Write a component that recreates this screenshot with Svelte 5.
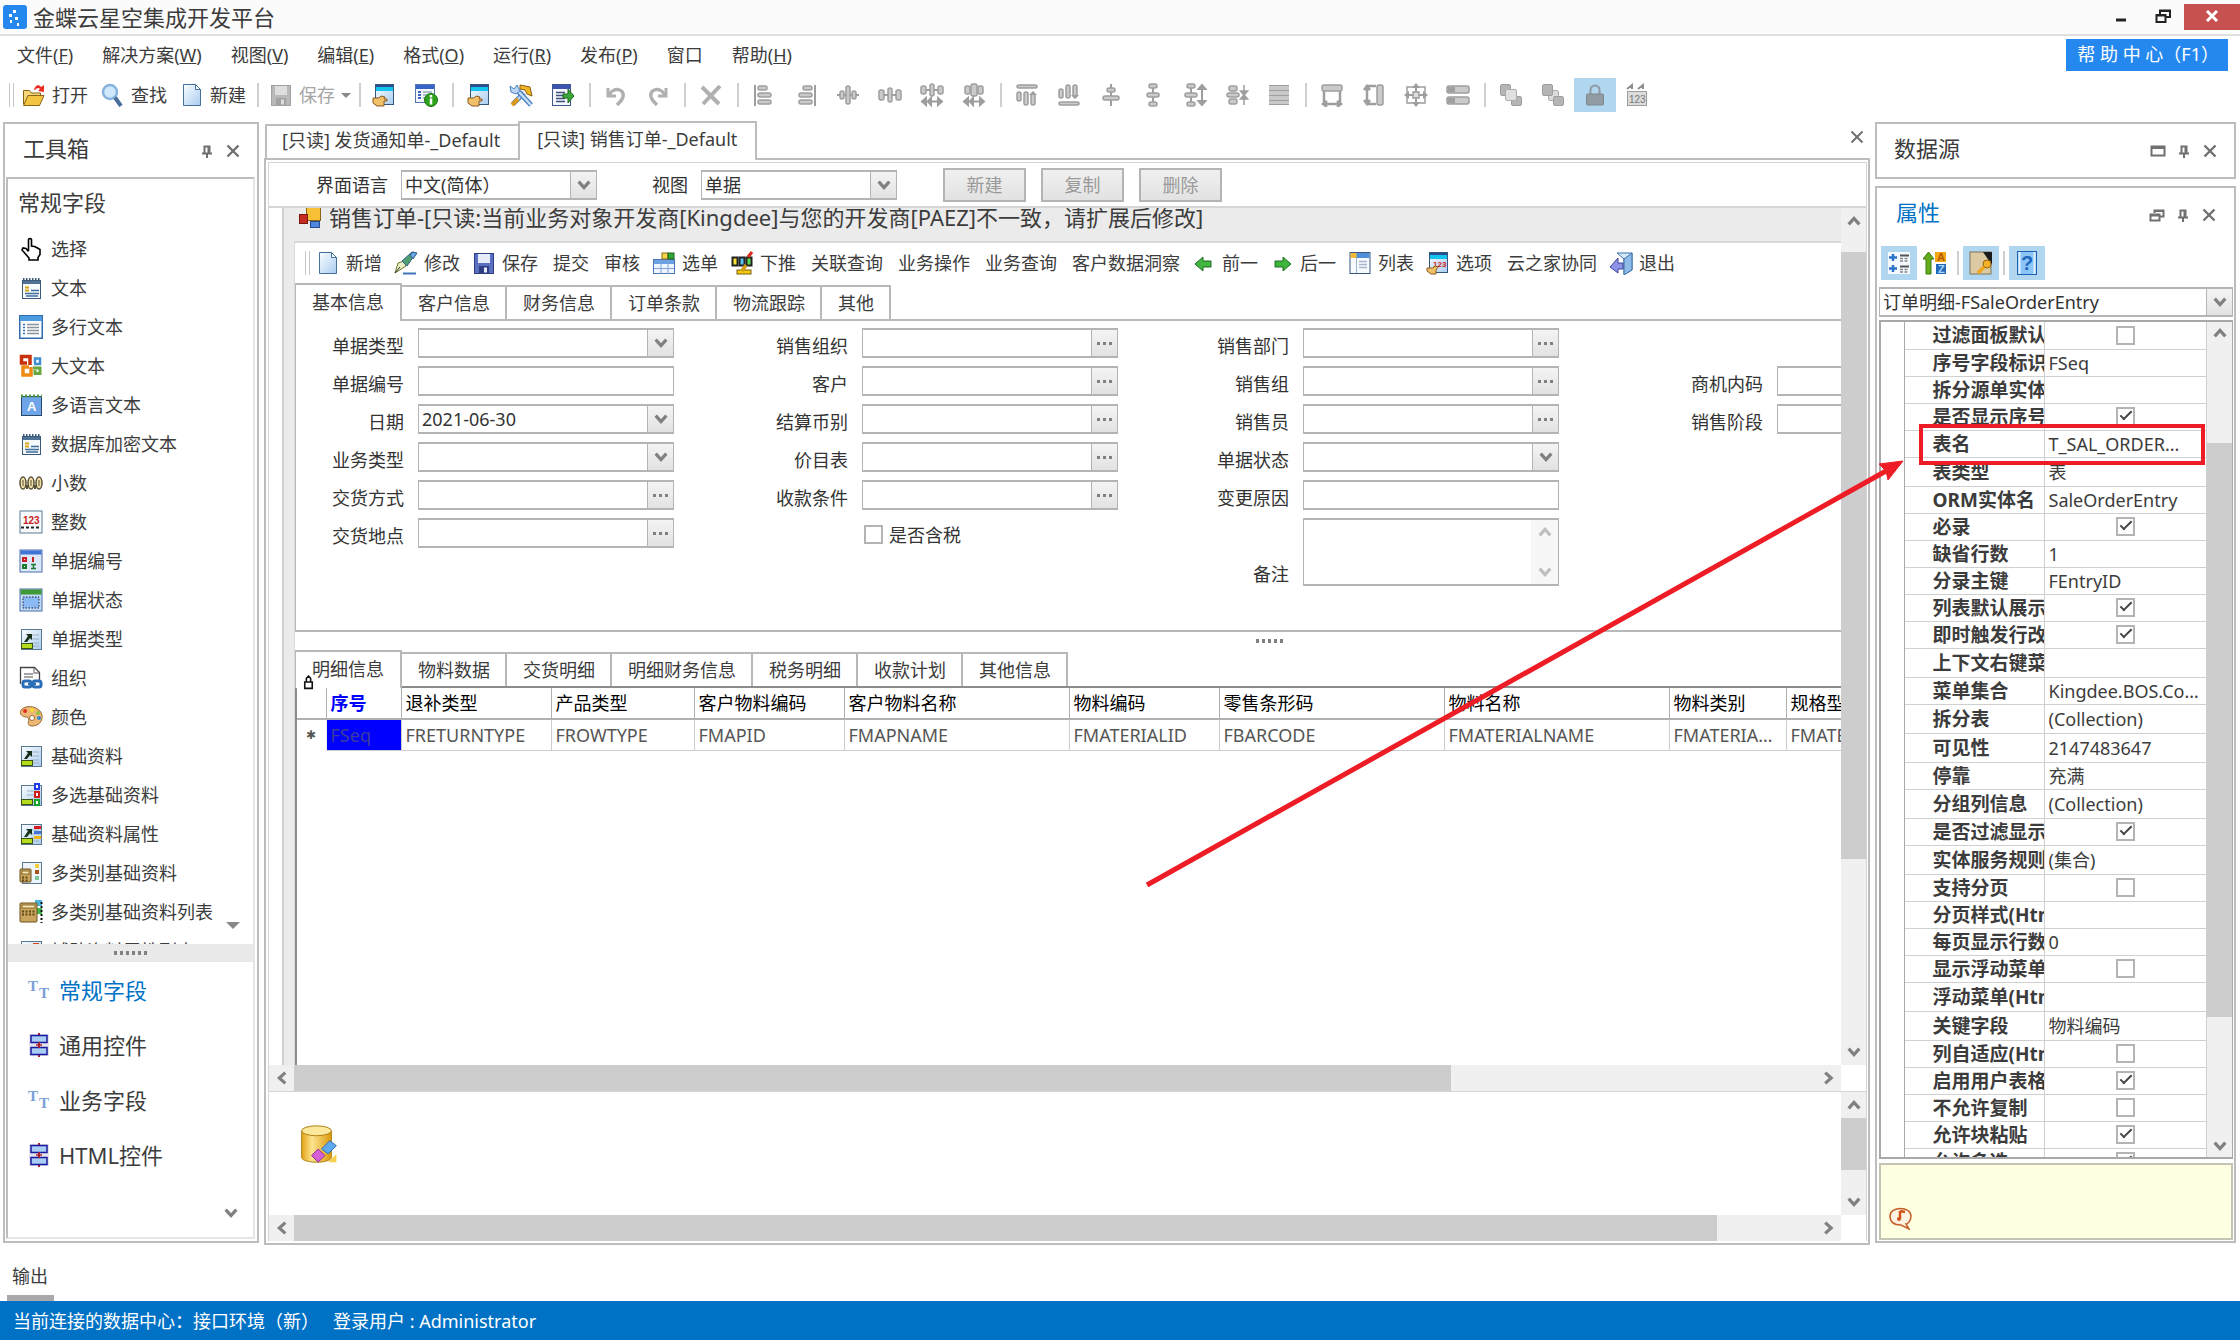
<script lang="ts">
  /**
   * BOS designer shell: toolbox on the left, form designer in the middle,
   * data source and property grid on the right.
   */

  // ---- icon helpers (24x24 box) ----
  const r = (x: number, y: number, w: number, h: number, fill: string, stroke = "none", rx = 0, sw = 1) =>
    `<rect x="${x}" y="${y}" width="${w}" height="${h}" fill="${fill}" stroke="${stroke}" stroke-width="${sw}" rx="${rx}"/>`;
  const p = (d: string, fill = "none", stroke = "none", w = 1) =>
    `<path d="${d}" fill="${fill}" stroke="${stroke}" stroke-width="${w}"/>`;
  const c = (x: number, y: number, rad: number, fill: string, stroke = "none", w = 1) =>
    `<circle cx="${x}" cy="${y}" r="${rad}" fill="${fill}" stroke="${stroke}" stroke-width="${w}"/>`;
  const dash = (s: string, pattern: string) => s.replace("/>", ` stroke-dasharray="${pattern}"/>`);
  const G = "#9e9e9e";
  const g = (x: number, y: number, w: number, h: number) => r(x, y, w, h, "#cacaca", G, 2, 1.5);

  const hand = p("M1 15h6l2-2 4 1-1 2h3v2h-3v5H5l-4-3z", "#f2c069", "#8a5a20");
  const win = r(3.5, 1.5, 18, 20, "url(#sky)", "#33577f") + r(4, 2, 17, 6, "#12c4ee") + r(4, 2, 17, 2, "#2b4f8c");
  const refBase = r(2.5, 2.5, 20, 20, "url(#sky)", "#5b7891") + p("M8 8h12M8 12h12M12 16h8M12 19h8", "none", "#9fb3c4");
  const green = r(2.5, 16.5, 11, 5, "#b4dc1c", "#3c5212");
  const refArrow = p("M5 15 9 9 7 7h6v6l-2-2-3 4z", "#16301a");
  const note = r(3.5, 4.5, 18, 18, "#f6fafd", "#3c5a78") + r(4, 5, 17, 3, "#4f7396") + dash(p("M4 3.5h17", "none", "#3c5a78", 3), "1.5 1.5")
    + p("M6 11.5h4M6 14.5h4", "none", "#d6a615", 2) + p("M12 14.5h8M6 17.5h14M7 20h12", "none", "#3f6e9a", 1.5);
  const calc = (x: number, y: number, s: number) => r(x, y, s, s + 2, "#c9a55c", "#6d5220", 1) + r(x + 2, y + 2, s - 4, 3, "#f7e8b8", "#8a6a2c")
    + dash(p(`M${x + 2} ${y + 8.5}h${s - 4}M${x + 2} ${y + 11.5}h${s - 4}`, "none", "#5f4718", 2), "2 1.5");
  const page = p("M3.5 1.5h12l5 5v16h-17z", "url(#sky)", "#466f9c") + p("M15.5 1.5v5h5z", "#f5faff", "#466f9c");
  const disk = (f: string, s: string, l: string) => r(2.5, 2.5, 19, 20, f, s) + r(6, 3, 12, 9, l) + r(7, 15, 10, 7, s) + r(12, 16.5, 3, 5, l);
  const link = r(2, 1, 20, 22, "#e4e4ec") + p("M12 0v24", "none", "#b1202a", 2) + r(4, 2.5, 16, 7, "#a9cdf5", "#1717a0", 0, 1.5) + r(4, 14.5, 16, 7, "#a9cdf5", "#1717a0", 0, 1.5) + p("M9 12h6M12 9v6", "none", "#b1202a", 1.5);
  const tt = `<text x="1" y="13" font-family="Liberation Serif" font-weight="bold" font-size="15" fill="#7b9fd6">T</text><text x="12" y="20" font-family="Liberation Serif" font-weight="bold" font-size="15" fill="#7b9fd6">T</text>`;
  const arrowsH = p("M3 18.5h18M6 15l-4 3.5 4 3.5zM18 15l4 3.5-4 3.5zM11 15l-3 3.5 3 3.5z", G, G, 2);
  const arrowsV = p("M19 3v18M15.5 6 19 2l3.5 4zM15.5 18l3.5 4 3.5-4z", G, G, 2);

  const icons: Record<string, string> = {
    open: p("M1.5 21V7.5h6l2 2.500h9v4", "#f5d77a", "#8a6414") + p("M1.5 22.5 6 12.500h16l-4.500 10z", "#f4c443", "#8a6414") + p("M12 7c1-5 5-6 7-3l3-2v7l-6-1 2-2c-2-2-3-1-5 1z", "#ee2c22"),
    find: c(9, 9, 7, "#cfe8fb", "#86b4de", 2.5) + p("M14 14.5 20 23", "none", "#4a6f9c", 4),
    newdoc: page,
    saveoff: disk("#b9b9b9", "#a2a2a2", "#dedede"),
    save: disk("#5a6fc0", "#2f3d85", "#e6ecfa"),
    formhand: win + hand,
    forminfo: r(1.5, 1.5, 19, 18, "#f3f7fc", "#5775b5") + r(2, 2, 18, 4, "#3a63c8") + p("M4 9h3M4 12h3M4 15h3", "none", "#3a63c8", 2) + p("M9 9h9M9 12h9M9 15h9", "none", "#9aa9c4", 1.5) + c(17, 17, 6.5, "#2fa21c", "#1b7210") + p("M17 15.5v6M17 12v2.5", "none", "#fff", 2.5),
    tools: p("M4 21 15 10", "none", "#4b7fc4", 5) + p("M4 21 15 10", "none", "#b9d6f3", 2.5) + p("M22 22 9 8", "none", "#4b7fc4", 5) + p("M22 22 9 8", "none", "#c9e0f7", 2.5) + p("M11 2l10 2 2 9-5-2-2-4-5-1z", "#f3b625", "#8a5d10") + p("M1 3l4 3 3-4 3 6-4 3-5-2z", "#b9d6f3", "#4b7fc4") + p("M3 22l6-6", "none", "#d99a1a", 4),
    export: r(1.5, 1.5, 18, 21, "#f4f6fb", "#41588f") + r(2, 2, 17, 4, "#3b55b0") + p("M5 9.5h9M5 12.5h9M5 15.5h9M5 18.5h9", "none", "#3e4f80", 1.5) + p("M12 11h5V6l6 7-6 7v-5h-5z", "#3ba63a", "#1c6a1f"),
    undo: p("M4 5v8h8", "none", "#b0b0b0", 3) + p("M5 12c4-8 16-7 14 2-1 4-4 6-6 8", "none", "#b0b0b0", 3.5),
    redo: p("M20 5v8h-8", "none", "#b0b0b0", 3) + p("M19 12C15 4 3 5 5 14c1 4 4 6 6 8", "none", "#b0b0b0", 3.5),
    cut: p("M3 4 20 21M21 3 4 21", "none", "#b0b0b0", 4),
    al1: p("M3 2v21", "none", G, 2) + g(6, 3, 9, 4) + g(6, 10, 13, 4) + g(6, 17, 13, 4),
    al2: p("M21 2v21", "none", G, 2) + g(9, 3, 9, 4) + g(5, 10, 13, 4) + g(5, 17, 13, 4),
    al3: p("M1 12h22", "none", G, 2) + g(4, 8, 4, 8) + g(10, 3, 4, 18) + g(16, 8, 4, 8),
    al4: p("M3 12h18", "none", G, 2) + g(1, 7, 5, 10) + g(10, 5, 4, 14) + g(18, 7, 5, 10),
    al5: p("M3 7h18", "none", G, 2) + g(1, 3, 5, 8) + g(10, 1, 4, 12) + g(18, 3, 5, 8) + arrowsH,
    al6: g(3, 3, 5, 8) + g(9, 1, 6, 12) + g(16, 3, 5, 8) + arrowsH,
    al7: g(2, 2, 20, 3) + g(2, 9, 4, 9) + g(9, 9, 4, 13) + g(16, 11, 4, 11) + p("M14 12l4-4 4 4z", G),
    al8: g(2, 19, 20, 3) + g(2, 6, 4, 9) + g(9, 2, 4, 13) + g(16, 2, 4, 12) + p("M14 12l4 4 4-4z", G),
    al9: p("M12 1v22", "none", G, 2) + g(8, 5, 8, 4) + g(4, 13, 16, 4),
    al10: p("M12 2v20", "none", G, 2) + g(8, 1, 8, 4) + g(6, 10, 12, 4) + g(8, 19, 8, 4),
    al11: p("M8 2v20", "none", G, 2) + g(4, 1, 8, 4) + g(2, 10, 12, 4) + g(4, 19, 8, 4) + arrowsV,
    al12: g(4, 3, 8, 5) + g(2, 10, 12, 4) + g(4, 16, 8, 5) + p("M19 2v20M15.5 8 19 12l3.500-4zM15.500 16l3.500-4 3.500 4z", G, G, 1.5),
    al13: r(2, 2, 20, 20, "#c9c9c9") + p("M2 2.5h20M2 7.5h20M2 12.5h20M2 17.5h20M2 21.5h20", "none", G),
    sz1: g(2, 2, 20, 6) + p("M4 8v13h16V8M7 18l-4 3 4 3M17 18l4 3-4 3", "none", G, 2.5),
    sz2: g(15, 2, 6, 20) + p("M14 3H5v18h9M2 7l3-4 3 4M2 17l3 4 3-4", "none", G, 2.5),
    sz3: r(3, 4, 18, 16, "none", G, 0, 1.5) + p("M12 0l4 5H8zM12 24l4-5H8zM0 12l5-4v8zM24 12l-5-4v8z", G) + p("M12 4v16M4 12h16", "none", G, 2) + r(9, 9, 6, 6, "#ddd", G, 0, 1.5),
    sz4: g(1, 3, 22, 7) + g(1, 14, 22, 7) + r(2, 4, 7, 5, "#a0a0a0") + r(2, 15, 7, 5, "#a0a0a0"),
    front: r(1.5, 1.5, 10, 11, "#b5b5b5", G, 1.5) + r(12.5, 13.5, 10, 9, "#b5b5b5", G, 1.5) + r(6.5, 6.5, 11, 11, "#e0e0e0", "#adadad", 1.5),
    back: r(7.5, 7.5, 10, 10, "#dcdcdc", "#adadad", 1.5) + r(1.5, 1.5, 10, 11, "#b5b5b5", G, 1.5) + r(12.5, 13.5, 10, 9, "#b5b5b5", G, 1.5),
    lock: p("M7.5 12V7a4.500 4.500 0 0 1 9 0v5", "none", "#8f9aa2", 2) + r(3.5, 11, 17, 11, "#929ba1", "#7d878e", 1),
    num: p("M2 6l5-4v4M13 6l5-4v4", "none", "#8f8f8f", 2) + r(2.5, 8.5, 19, 14, "#dcdcdc", G) + `<text x="4" y="20" font-size="10" font-family="Liberation Sans" fill="#777">123</text>`,

    pick: p("M9.5 14V2.5c0-1.300 3-1.300 3 0V9l3 .5 3 1.500 2.500 1.500v5l-2 3v2.500h-9V21l-7-8 1-2 3 .5 2.500 3", "#fff", "#000", 1.6),
    text: note,
    multiline: r(.75, .75, 22.5, 22.5, "#fdfeff", "#2f6cb4", 0, 1.5) + r(1, 1, 22, 5, "#4d9be0") + p("M4 9.5h2M4 12.5h2M4 15.5h2M4 18.5h2", "none", "#2f6cb4", 1.5) + p("M8 9.5h12M8 12.5h12M8 15.5h12M8 18.5h12", "none", "#8b939c", 1.5),
    bigtext: p("M11 11V2.5H2.5V9H8", "none", "#c8310c", 3.5) + p("M15 10h6V4.500h-5V9", "none", "#3f8fd0", 2.500) + p("M14 14h7v5.500h-5V16", "none", "#67a83e", 3) + p("M10 13H4v8h8v-8", "none", "#ef8a12", 3.5),
    lang: r(2.5, 3.5, 20, 19, "#6fa5e8", "#29486e") + dash(p("M2 3h21", "none", "#4c9a3a", 3), "2 2") + `<text x="8" y="18" font-size="13" font-weight="bold" font-family="Liberation Sans" fill="#fff">A</text>`,
    decimal: [4, 12, 20].map((x) => `<ellipse cx="${x}" cy="12" rx="3" ry="6" fill="#f1dfa8" stroke="#5a5134" stroke-width="1.5"/><path d="M${x} 9v6" stroke="#5a5134"/>`).join("") + p("M8 14v4M16 14v4", "none", "#5a5134", 2),
    integer: r(1, 1, 22, 22, "#f6fafd", "#5b7891") + `<text x="4" y="14" font-size="10" font-weight="bold" font-family="Liberation Sans" fill="#c81d22">123</text>` + dash(p("M2 17.5h20", "none", "#222", 2), "3 2"),
    billno: r(1, 1, 22, 22, "#dce9fb", "#4b6fa8") + r(1.5, 1.5, 21, 4, "#3f73d6") + r(4, 9, 3, 3, "none", "#c81d22", 0, 2) + r(4, 16, 3, 3, "none", "#1c7a2e", 0, 2) + p("M14 8v5", "none", "#c81d22", 2) + p("M12 15.5h5M12 19.5h5M14.5 15v5", "none", "#1c7a2e", 1.5),
    status: r(1, 1, 22, 22, "#bfd9f8", "#4b6fa8") + r(1.5, 1.5, 21, 5, "#3f9a35") + dash(r(4, 9, 16, 11, "#8ab9f3", "#223"), "1.5 1.5"),
    billtype: refBase + refArrow + green,
    org: p("M1.5 18V1.5h14l5 5V14", "#fff", "#444", 1.3) + p("M15 2v5h5M5 8h9M5 11h9", "none", "#888", 1.3) + r(4, 15, 8, 6, "none", "#2a6cb5", 2, 3) + r(14, 15, 8, 6, "none", "#2a6cb5", 2, 3) + p("M9 18h8", "none", "#2a6cb5", 2),
    color: p("M2 5c5-6 19-4 21 5 1 7-4 11-10 11-8 0 0-8-5-9-5 0-8-3-6-7z", "#edb877", "#9b6a31") + c(6, 6, 2, "#e02f20") + c(13, 5, 2, "#f5dd2a") + c(19, 8, 2, "#8dc63f") + c(20, 13, 2, "#2f88d0") + c(13, 13, 2.5, "#fff", "#9b6a31"),
    multiref: refBase + green + r(16, 1, 4, 5, "#fff", "#2439e6", 0, 2) + r(16, 9, 4, 5, "#fff", "#d11a1a", 0, 2) + r(16, 17, 4, 5, "#fff", "#18a12c", 0, 2),
    refprop: refBase + refArrow + green + r(15, 4, 7, 3, "#d8181c") + r(15, 9, 7, 3, "#4673d4") + r(15, 14, 7, 3, "#f3b416"),
    multicat: r(3.5, 1.5, 19, 21, "#eef5fb", "#5b7891") + r(16, 3, 4, 4, "#f6cf3c") + r(16, 9, 4, 4, "#a5521c") + r(16, 15, 4, 4, "#7cc49a") + calc(1, 8, 11),
    multicatlist: r(16, 0, 7, 6, "#4fb4dc") + r(17, 8, 6, 6, "#3fb849") + dash(p("M22.5 2v21", "none", "#111", 2), "2 2") + calc(1, 3, 17),
    aux: refBase + r(14, 4, 6, 4, "#d8481c"),

    edit: p("M1 22 4 12l6-2 2 5z", "#e9edc4", "#6d7a2a") + p("M8 10 18 1l4 1-9 13z", "#4fa06e", "#2d5e8c") + p("M16 4l3-3 4 1-4 6z", "#6ba6e4", "#2d5e8c") + p("M9 22.5h13", "none", "#3e74b4", 2) + p("M1 22l5-6", "none", "#333", 1),
    pickbill: r(1.5, 8.5, 21, 14, "#eef5ff", "#4a78b8") + r(2, 9, 20, 4, "#6ba0e4") + p("M9 9v14M16 9v14M2 17.5h20", "none", "#7fa7d9") + r(10, 2, 6, 6, "#f7d64a", "#8a6b14") + r(16, 2, 6, 6, "#33a532", "#1b651a"),
    push: r(2.5, 6.5, 5, 8, "#f8e53b", "#222", 0, 2) + r(9.5, 6.5, 5, 8, "#5cc3f0", "#222", 0, 2) + r(16.5, 6.5, 5, 8, "#5fdd52", "#222", 0, 2) + p("M22 1 18 6", "none", "#d8281c", 3) + r(7, 19, 14, 4, "#f5cb16", "#7c5d08") + p("M16 14l-4 6", "none", "#d49a10", 3.5),
    prev: p("M3 13l8-7v4h8v6h-8v4z", "#3fb53c", "#1d6e22"),
    next: p("M21 13l-8-7v4H5v6h8v4z", "#3fb53c", "#1d6e22"),
    list: r(2, 1.5, 20, 21, "#f7fbff", "#39597f") + r(2.5, 2, 19, 5, "#4f8fd8") + r(2.5, 2, 6, 5, "#f0b93a") + p("M8.5 7v15", "none", "#9db5cf") + p("M11 10.5h8M11 13.5h8M11 16.5h8", "none", "#a5b6cc", 1.5),
    option: win + `<text x="7" y="16" font-size="8" font-weight="bold" font-family="Liberation Sans" fill="#d11a1a">123</text>` + p("M1 17h6l2-2 3 1-2 3v4H5l-4-3z", "#f2c069", "#8a5a20"),
    exit: p("M8 2h15v17l-8 4V8z", "#d6e8fa", "#3c6ea8") + p("M15 8 23 2v17l-8 5z", "#8fbbe9", "#3c6ea8") + p("M1 16l8-9v5h5v6H9v4z", "#8d93e6", "#3d449c"),
    winform: r(8.5, 2.5, 14, 13, "#f5c033", "#8a6414") + r(1.5, 9.5, 8, 9, "#c52b21", "#7a1710") + r(12.5, 16.5, 9, 6, "#4d87e0", "#274c8e"),

    cat: r(1, 1, 22, 22, "#f4faff") + p("M2 6.5h8M6 3v7M2 17.5h8M6 14v7", "none", "#2c74c9", 2.5) + p("M13 4.5h9M13 15.5h9", "none", "#555", 2) + dash(p("M13 7.5h9M13 10h9M13 18.5h9M13 21h9", "none", "#888", 1.5), "3 1.5"),
    sort: p("M0 8 5.5 1 11 8H8v15H3V8z", "#63ad1c", "#3d7a10") + r(12, 1, 11, 10, "#f5a716") + r(13, 13, 10, 10, "#2668b8") + `<text x="14" y="10" font-size="11" font-weight="bold" font-family="Liberation Sans" fill="#b35a00">A</text><text x="15" y="22" font-size="11" font-weight="bold" font-family="Liberation Sans" fill="#a9d4ff">Z</text>`,
    props: r(1, 1, 21, 22, "#dccba2", "#7d745c") + p("M14 1h9v13z", "#1b1b1b") + c(18, 13, 4, "#f4b12a", "#9a6508") + p("M15 16 9 22", "none", "#f0a61c", 3.5),
    help: r(2.5, .5, 19, 23, "#8cc6f7", "#1b60b4") + p("M4.5 1v22M19.5 1v22", "none", "#e2f1ff", 2) + `<text x="6" y="19" font-size="20" font-weight="bold" font-family="Liberation Sans" fill="#1f66bd">?</text>`,
    tt,
    link,
    tip: p("M2 10c0-10 21-10 21 0 0 6-4 8-5 8l3 5-8-4C6 19 2 16 2 10z", "#fff3e2", "#c6602a", 1.5) + p("M12 5v8M12 5l5 1", "none", "#d2541c", 2.5) + c(11, 13, 2, "#d2541c"),
    db: p("M1 4v16c0 4 18 4 18 0V4z", "url(#gold)", "#b07f14", .6) + `<ellipse cx="10" cy="4" rx="9" ry="3" fill="#fbe89c" stroke="#b07f14" stroke-width=".6"/>` + p("M13 15l5-5 4 3-5 5z", "#5ea9ee", "#2f6eb0", .6) + p("M7 19l4-4 4 4-4 4z", "#d65fd8", "#8f2f96", .6) + p("M17 23l5-5v5z", "#f7cf4c"),
  };

  const menus = [
    ["文件", "F"], ["解决方案", "W"], ["视图", "V"], ["编辑", "E"], ["格式", "O"],
    ["运行", "R"], ["发布", "P"], ["窗口", ""], ["帮助", "H"],
  ];

  // groups in the main toolbar are divided by a thin rule
  const toolGroups = [
    ["formhand", "forminfo"],
    ["formhand", "tools", "export"],
    ["undo", "redo"],
    ["cut"],
    ["al1", "al2", "al3", "al4", "al5", "al6"],
    ["al7", "al8", "al9", "al10", "al11", "al12", "al13"],
    ["sz1", "sz2", "sz3", "sz4"],
    ["front", "back", "lock", "num"],
  ];

  const toolbox = [
    ["pick", "选择"], ["text", "文本"], ["multiline", "多行文本"], ["bigtext", "大文本"],
    ["lang", "多语言文本"], ["text", "数据库加密文本"], ["decimal", "小数"], ["integer", "整数"],
    ["billno", "单据编号"], ["status", "单据状态"], ["billtype", "单据类型"], ["org", "组织"],
    ["color", "颜色"], ["billtype", "基础资料"], ["multiref", "多选基础资料"],
    ["refprop", "基础资料属性"], ["multicat", "多类别基础资料"], ["multicatlist", "多类别基础资料列表"],
    ["aux", "辅助资料属性列表"],
  ];

  const toolboxNav = [["tt", "常规字段"], ["link", "通用控件"], ["tt", "业务字段"], ["link", "HTML控件"]];

  const formTools = [
    ["newdoc", "新增"], ["edit", "修改"], ["save", "保存"], ["", "提交"], ["", "审核"],
    ["pickbill", "选单"], ["push", "下推"], ["", "关联查询"], ["", "业务操作"], ["", "业务查询"],
    ["", "客户数据洞察"], ["prev", "前一"], ["next", "后一"], ["list", "列表"], ["option", "选项"],
    ["", "云之家协同"], ["exit", "退出"],
  ];

  const headTabs = ["基本信息", "客户信息", "财务信息", "订单条款", "物流跟踪", "其他"];
  const entryTabs = ["明细信息", "物料数据", "交货明细", "明细财务信息", "税务明细", "收款计划", "其他信息"];

  type Kind = "combo" | "lookup" | "text";
  const fields: { label: string; kind: Kind; row: number; col: number; value?: string }[] = [
    { label: "单据类型", kind: "combo", row: 1, col: 1 },
    { label: "单据编号", kind: "text", row: 2, col: 1 },
    { label: "日期", kind: "combo", row: 3, col: 1, value: "2021-06-30" },
    { label: "业务类型", kind: "combo", row: 4, col: 1 },
    { label: "交货方式", kind: "lookup", row: 5, col: 1 },
    { label: "交货地点", kind: "lookup", row: 6, col: 1 },
    { label: "销售组织", kind: "lookup", row: 1, col: 3 },
    { label: "客户", kind: "lookup", row: 2, col: 3 },
    { label: "结算币别", kind: "lookup", row: 3, col: 3 },
    { label: "价目表", kind: "lookup", row: 4, col: 3 },
    { label: "收款条件", kind: "lookup", row: 5, col: 3 },
    { label: "销售部门", kind: "lookup", row: 1, col: 5 },
    { label: "销售组", kind: "lookup", row: 2, col: 5 },
    { label: "销售员", kind: "lookup", row: 3, col: 5 },
    { label: "单据状态", kind: "combo", row: 4, col: 5 },
    { label: "变更原因", kind: "text", row: 5, col: 5 },
    { label: "商机内码", kind: "text", row: 2, col: 7 },
    { label: "销售阶段", kind: "text", row: 3, col: 7 },
  ];

  const columns: [string, string, number][] = [
    ["退补类型", "FRETURNTYPE", 150], ["产品类型", "FROWTYPE", 143], ["客户物料编码", "FMAPID", 150],
    ["客户物料名称", "FMAPNAME", 225], ["物料编码", "FMATERIALID", 150], ["零售条形码", "FBARCODE", 225],
    ["物料名称", "FMATERIALNAME", 225], ["物料类别", "FMATERIALTYPE", 117], ["规格型号", "FMATERIALMODEL", 150],
  ];

  /** true / false render a tick box, anything else is plain text */
  const props: { name: string; value: string | boolean; tall?: boolean }[] = [
    { name: "过滤面板默认展开", value: false },
    { name: "序号字段标识", value: "FSeq" },
    { name: "拆分源单实体", value: "" },
    { name: "是否显示序号列", value: true },
    { name: "表名", value: "T_SAL_ORDER..." },
    { name: "表类型", value: "表", tall: true },
    { name: "ORM实体名", value: "SaleOrderEntry" },
    { name: "必录", value: true },
    { name: "缺省行数", value: "1" },
    { name: "分录主键", value: "FEntryID" },
    { name: "列表默认展示", value: true },
    { name: "即时触发行改变", value: true },
    { name: "上下文右键菜单", value: "", tall: true },
    { name: "菜单集合", value: "Kingdee.BOS.Core.Metadata" },
    { name: "拆分表", value: "(Collection)", tall: true },
    { name: "可见性", value: "2147483647", tall: true },
    { name: "停靠", value: "充满" },
    { name: "分组列信息", value: "(Collection)", tall: true },
    { name: "是否过滤显示", value: true },
    { name: "实体服务规则", value: "(集合)", tall: true },
    { name: "支持分页", value: false },
    { name: "分页样式(Html)", value: "" },
    { name: "每页显示行数", value: "0" },
    { name: "显示浮动菜单", value: false },
    { name: "浮动菜单(Html)", value: "", tall: true },
    { name: "关键字段", value: "物料编码", tall: true },
    { name: "列自适应(Html)", value: false },
    { name: "启用用户表格", value: true },
    { name: "不允许复制", value: false },
    { name: "允许块粘贴", value: true },
    { name: "允许多选", value: true },
  ];
</script>

{#snippet icon(name: string)}
  <svg class="ico" viewBox="0 0 24 24" aria-hidden="true">{@html icons[name]}</svg>
{/snippet}

{#snippet chevron(dir: string)}
  <svg class="chev {dir}" viewBox="0 0 12 12" aria-hidden="true"><path d="M2 3.500 6 8l4-4.500" /></svg>
{/snippet}

{#snippet combo(id: string, value: string)}
  <span class="box">
    <select {id} aria-label={id === "entity" ? "对象" : undefined}><option>{value}</option></select>
    <span class="drop">{@render chevron("down")}</span>
  </span>
{/snippet}

{#snippet scrollbar(dir: string, before: number, thumb: number, after: number)}
  <div class="scroll {dir}" aria-hidden="true">
    <span class="end">{@render chevron(dir === "v" ? "up" : "left")}</span>
    <span style="flex-grow: {before}"></span>
    <span class="thumb" style="flex-grow: {thumb}"></span>
    <span style="flex-grow: {after}"></span>
    <span class="end">{@render chevron(dir === "v" ? "down" : "right")}</span>
  </div>
{/snippet}

{#snippet panelButtons(first: string)}
  <span class="panel-btns">
    {#if first}
      <button aria-label="窗口">
        <svg viewBox="0 0 16 16">
          {#if first === "max"}
            <path d="M1.500 3.500h13v9h-13zM1 5h14" />
          {:else}
            <path d="M5.500 6V3.500h9v6H11M5 4h10M1.500 7.500h9v6h-9zM1 8.500h10" />
          {/if}
        </svg>
      </button>
    {/if}
    <button aria-label="固定">
      <svg viewBox="0 0 16 16"><path d="M5.500 10V3.500h5V10M9.500 3v7M3 10.500h10M8 11v4" /></svg>
    </button>
    <button aria-label="关闭">
      <svg viewBox="0 0 16 16"><path d="M2.500 2.500l11 11M13.500 2.500l-11 11" stroke-width="2.400" /></svg>
    </button>
  </span>
{/snippet}

<svg class="defs" aria-hidden="true">
  <defs>
    <linearGradient id="sky" x1="0" y1="0" x2="1" y2="1">
      <stop offset="0" stop-color="#fafdff" /><stop offset="1" stop-color="#a9cdf0" />
    </linearGradient>
    <linearGradient id="gold">
      <stop offset="0" stop-color="#e3a412" /><stop offset=".35" stop-color="#fbe48f" /><stop offset="1" stop-color="#dc9808" />
    </linearGradient>
  </defs>
</svg>

<div class="app">
  <header class="titlebar">
    <svg class="logo" viewBox="0 0 24 24" aria-hidden="true">
      <rect width="24" height="24" rx="3" fill="#2588ef" />
      <path d="M10 5h3v3h-3zM6 9h3v3H6zM12 12h3v3h-3zM7 15h2v3H7zM14 18h2v3h-2z" fill="#fff" />
    </svg>
    <h1>金蝶云星空集成开发平台</h1>
    <div class="win-btns">
      <button aria-label="最小化"><svg viewBox="0 0 16 16"><path d="M3 12h10" stroke-width="3" /></svg></button>
      <button aria-label="还原"><svg viewBox="0 0 16 16"><path d="M5 6V2.500h10V9h-4M5 3h10M1.500 7h9v7h-9zM1 7.500h10" stroke-width="2" /></svg></button>
      <button class="close" aria-label="关闭"><svg viewBox="0 0 16 16"><path d="M3 3l10 10M13 3 3 13" stroke-width="3" /></svg></button>
    </div>
  </header>

  <nav class="menubar">
    {#each menus as [label, key]}
      <button>{label}{#if key}(<u>{key}</u>){/if}</button>
    {/each}
    <a class="help" href="#help">帮 助 中 心（F1）</a>
  </nav>

  <div class="toolbar">
    <span class="grip"></span>
    <button class="wide">{@render icon("open")}打开</button>
    <button class="wide">{@render icon("find")}查找</button>
    <button class="wide">{@render icon("newdoc")}新建</button>
    <span class="rule"></span>
    <button class="wide off">{@render icon("saveoff")}保存<i class="tri"></i></button>
    {#each toolGroups as group}
      <span class="rule"></span>
      {#each group as name}
        <button class="sq" class:on={name === "lock"} aria-label={name}>{@render icon(name)}</button>
      {/each}
    {/each}
  </div>

  <main class="work">
    <aside class="panel toolbox">
      <div class="panel-head"><h2>工具箱</h2>{@render panelButtons("")}</div>
      <div class="toolbox-body">
        <h3>常规字段</h3>
        <ul class="tools">
          {#each toolbox as [ico, label]}
            <li>{@render icon(ico)}{label}</li>
          {/each}
        </ul>
        <i class="tri more"></i>
        <div class="splitter"><span class="dots six"></span></div>
        <ul class="cats">
          {#each toolboxNav as [ico, label], i}
            <li class:active={i === 0}>{@render icon(ico)}{label}</li>
          {/each}
        </ul>
        <div class="cats-more">{@render chevron("down")}</div>
      </div>
    </aside>

    <section class="docs">
      <div class="doc-tabs">
        <button>[只读] 发货通知单-_Default</button>
        <button class="active">[只读] 销售订单-_Default</button>
        <button class="doc-close" aria-label="关闭">
          <svg viewBox="0 0 16 16"><path d="M2.500 2.500l11 11M13.500 2.500l-11 11" /></svg>
        </button>
      </div>

      <div class="doc">
        <div class="doc-in">
          <div class="langbar">
            <label for="lang">界面语言</label>
            {@render combo("lang", "中文(简体）")}
            <label class="second" for="view">视图</label>
            {@render combo("view", "单据")}
            <div class="lang-btns">
              <button disabled>新建</button>
              <button disabled>复制</button>
              <button disabled>删除</button>
            </div>
          </div>

          <div class="canvas-row">
            <div class="canvas">
              <div class="form-title">
                {@render icon("winform")}
                <span>销售订单-[只读:当前业务对象开发商[Kingdee]与您的开发商[PAEZ]不一致，请扩展后修改]</span>
              </div>
              <div class="form-body">
                <div class="form-tools">
                  <span class="grip"></span>
                  {#each formTools as [ico, label]}
                    <button>{#if ico}{@render icon(ico)}{/if}{label}</button>
                  {/each}
                </div>

                <div class="tabs">
                  {#each headTabs as tab, i}
                    <button class:active={i === 0}>{tab}</button>
                  {/each}
                </div>
                <div class="head-pane">
                  {#each fields as f, i}
                    <label for="f{i}" style="grid-row: {f.row}; grid-column: {f.col}">{f.label}</label>
                    <div class="cell" style="grid-row: {f.row}; grid-column: {f.col + 1}">
                      {#if f.kind === "combo"}
                        {@render combo(`f${i}`, f.value ?? "")}
                      {:else if f.kind === "lookup"}
                        <span class="box"><input id="f{i}" /><button class="drop" aria-label={f.label}><span class="dots three"></span></button></span>
                      {:else}
                        <span class="box"><input id="f{i}" /></span>
                      {/if}
                    </div>
                  {/each}
                  <label class="tax"><input type="checkbox" />是否含税</label>
                  <label class="memo-label" for="memo">备注</label>
                  <div class="box memo">
                    <textarea id="memo"></textarea>
                    <span class="memo-scroll">{@render chevron("up")}{@render chevron("down")}</span>
                  </div>
                </div>

                <div class="form-split"><span class="dots five"></span></div>

                <div class="tabs entry">
                  {#each entryTabs as tab, i}
                    <button class:active={i === 0}>{tab}</button>
                  {/each}
                  <svg class="pad" viewBox="0 0 10 14" aria-hidden="true"><path d="M1.500 6.500h7v6h-7zM3 6V3l2-2 2 2v3" /></svg>
                </div>
                <div class="entry-pane">
                  <table>
                    <colgroup>
                      <col style="width: 29px" /><col style="width: 75px" />
                      {#each columns as col}<col style="width: {col[2]}px" />{/each}
                    </colgroup>
                    <thead>
                      <tr><th></th><th class="seq">序号</th>{#each columns as col}<th>{col[0]}</th>{/each}</tr>
                    </thead>
                    <tbody>
                      <tr><td class="star">✱</td><td class="sel">FSeq</td>{#each columns as col}<td>{col[1]}</td>{/each}</tr>
                    </tbody>
                  </table>
                </div>
              </div>
            </div>
            {@render scrollbar("v", 18, 607, 180)}
          </div>
          <div class="hrow">{@render scrollbar("h", 0, 1156, 365)}</div>

          <div class="tray">
            <div class="tray-body">
              <svg class="db" viewBox="0 0 23 24" aria-hidden="true">{@html icons.db}</svg>
            </div>
            {@render scrollbar("v", 0, 53, 19)}
          </div>
          <div class="hrow">{@render scrollbar("h", 0, 1422, 99)}</div>
        </div>
      </div>
    </section>

    <aside class="right">
      <section class="panel">
        <div class="panel-head"><h2>数据源</h2>{@render panelButtons("max")}</div>
      </section>
      <section class="panel props">
        <div class="panel-head"><h2 class="blue">属性</h2>{@render panelButtons("restore")}</div>
        <div class="prop-tools">
          <button class="on" aria-label="分类">{@render icon("cat")}</button>
          <button aria-label="排序">{@render icon("sort")}</button>
          <span class="rule"></span>
          <button class="on" aria-label="属性">{@render icon("props")}</button>
          <span class="rule"></span>
          <button class="on" aria-label="帮助">{@render icon("help")}</button>
        </div>
        {@render combo("entity", "订单明细-FSaleOrderEntry")}
        <div class="grid">
          <div class="grid-rows">
            <table>
              <tbody>
                {#each props as prop}
                  <tr class:tall={prop.tall}>
                    <td class="gut"></td>
                    <th scope="row">{prop.name}</th>
                    {#if typeof prop.value === "boolean"}
                      <td class="mid"><input type="checkbox" checked={prop.value} aria-label={prop.name} /></td>
                    {:else}
                      <td>{prop.value}</td>
                    {/if}
                  </tr>
                {/each}
              </tbody>
            </table>
          </div>
          {@render scrollbar("v", 99, 576, 118)}
        </div>
        <div class="tip">{@render icon("tip")}</div>
      </section>
    </aside>
  </main>

  <div class="output"><button>输出</button></div>
  <footer class="status">
    <span>当前连接的数据中心：接口环境（新）</span>
    <span>登录用户 : Administrator</span>
  </footer>

  <svg class="marks" aria-hidden="true">
    <rect x="1921" y="426" width="282" height="37" />
    <path d="M1147 885 1886 471" />
    <path class="head" d="M1903 461 1888 480 1886 471 1879 464z" />
  </svg>
</div>

<style>
:global(body) { margin: 0; }

.app {
  position: relative;
  display: flex;
  flex-direction: column;
  height: 100vh;
  min-width: 1600px;
  overflow: hidden;
  background: #fff;
  color: #3c3c3c;
  font: 18px/26px "Noto Sans", "Noto Sans CJK SC", sans-serif;
}
.app *, .app *::before { box-sizing: border-box; }
.defs { position: absolute; width: 0; height: 0; }
button, input, select, textarea {
  margin: 0;
  padding: 0;
  border: 0;
  border-radius: 0;
  background: none;
  color: inherit;
  font: inherit;
  outline: none;
}
button { white-space: nowrap; }
h1, h2, h3 { margin: 0; font-size: 22px; font-weight: 400; line-height: 32px; }
ul { margin: 0; padding: 0; list-style: none; }
.ico { width: 24px; height: 24px; flex: none; }
.chev { width: 16px; height: 16px; fill: none; stroke: #808080; stroke-width: 2.4; flex: none; }
.chev.up { transform: rotate(180deg); }
.chev.left { transform: rotate(90deg); }
.chev.right { transform: rotate(-90deg); }
.tri {
  border: 5px solid transparent;
  border-top-color: #888;
  border-bottom: 0;
}

/* title, menu, toolbar */
.titlebar {
  display: flex;
  align-items: center;
  flex: none;
  height: 36px;
  padding-left: 3px;
  background: #fbfbfb;
  border-bottom: 2px solid #e0e0e0;
}
.logo { width: 24px; height: 24px; margin-right: 6px; }
.win-btns { display: flex; align-self: flex-start; margin: 4px 0 0 auto; }
.win-btns button { width: 42px; height: 26px; }
.win-btns svg { width: 16px; height: 16px; margin-top: 4px; fill: none; stroke: #222; }
.win-btns .close { width: 56px; background: #c75050; }
.win-btns .close svg { stroke: #fff; }

.menubar {
  display: flex;
  align-items: center;
  gap: 29px;
  flex: none;
  height: 38px;
  padding: 0 12px 1px 17px;
}
.help {
  margin-left: auto;
  padding: 2px 9px 4px 11px;
  background: #2588ef;
  color: #fff;
  text-decoration: none;
  white-space: nowrap;
}

.toolbar {
  display: flex;
  align-items: center;
  flex: none;
  height: 47px;
  padding: 0 0 5px 9px;
}
.grip { width: 5px; height: 24px; border: solid #c8c8c8; border-width: 0 1px; flex: none; }
.rule { width: 2px; height: 24px; margin: 0 6px; background: #cfcfcf; flex: none; }
.wide { display: flex; align-items: center; gap: 6px; padding: 0 5px 0 8px; }
.wide.off { padding: 0 2px 0 4px; color: #a5a5a5; }
.wide.off + .rule { margin-right: 2px; }
.sq { display: grid; place-items: center; width: 42px; height: 34px; flex: none; }
.on { background: #b1d6f0; }
.sq + .rule { margin: 0 4px 0 5px; }

/* panels */
.work { display: flex; flex: 1; min-height: 0; padding: 0 4px 0 3px; }
.panel { border: 2px solid #bdbdbd; background: #fff; }
.panel-head { display: flex; align-items: center; height: 53px; padding: 0 16px 0 17px; flex: none; }
.panel-head h2 { flex: 1; padding-bottom: 6px; }
.blue { color: #0072c6; }
.panel-btns { display: flex; gap: 10px; }
.panel-btns button { width: 16px; height: 20px; }
.panel-btns svg, .doc-close svg { display: block; width: 16px; height: 16px; fill: none; stroke: #707070; stroke-width: 2; }

.toolbox { display: flex; flex-direction: column; width: 256px; margin: 1px 5px 2px 0; flex: none; padding: 0 2px 2px 1px; }
.toolbox .panel-btns { margin-right: -2px; }
.toolbox-body {
  position: relative;
  display: flex;
  flex-direction: column;
  flex: 1;
  min-height: 0;
  border: 2px solid #e6e6e6;
  border-top-color: #bdbdbd;
  border-left-color: #bdbdbd;
}
.toolbox h3 { padding: 7px 0 11px 10px; flex: none; }
.tools { flex: 1; min-height: 0; overflow: hidden; }
.tools li { display: flex; align-items: center; gap: 8px; height: 39px; padding-left: 11px; white-space: nowrap; }
.more { position: absolute; right: 13px; top: 743px; border-width: 7px 7px 0; }
.splitter { display: flex; align-items: center; justify-content: center; height: 18px; flex: none; background: #e9e9e9; }
.dots { height: 4px; background: repeating-linear-gradient(90deg, #808080 0 3px, transparent 3px 6px); }
.dots.six { width: 33px; }
.dots.five { width: 27px; }
.dots.three { width: 15px; height: 3px; }
.cats { flex: none; }
.cats li { display: flex; align-items: center; gap: 8px; height: 55px; padding-left: 19px; font-size: 22px; }
.cats .active { color: #0072c6; }
.cats-more { display: flex; justify-content: flex-end; align-items: center; height: 55px; padding: 6px 14px 0 0; flex: none; }

/* document area */
.docs { display: flex; flex-direction: column; flex: 1; min-width: 0; margin-right: 5px; }
.doc-tabs { display: flex; align-items: flex-end; height: 37px; padding-left: 1px; flex: none; }
.doc-tabs button:not(.doc-close) { height: 34px; padding: 0 18px 4px 15px; border: 2px solid #bdbdbd; border-bottom: 0; }
.doc-tabs button.active:not(.doc-close) { height: 39px; margin: 0 0 -2px -2px; padding: 0 18px 6px 17px; background: #fff; position: relative; }
.doc-close { margin: 0 5px 13px auto; }
.doc { display: flex; flex: 1; min-height: 0; padding: 2px 1px 2px 2px; border: 2px solid #bdbdbd; }
.doc-in { display: flex; flex-direction: column; flex: 1; min-width: 0; border: 1px solid #d5d5d5; border-bottom: 0; }
.langbar { display: flex; align-items: center; height: 45px; padding-left: 47px; flex: none; border-bottom: 2px solid #d5d5d5; }
.langbar label { margin: 0 13px 0 0; color: #333; }
.langbar .second { margin-left: 55px; }
.langbar .box { width: 196px; }
.lang-btns { display: flex; gap: 15px; margin-left: 46px; }
.lang-btns button { width: 83px; height: 34px; border: 2px solid #b4b4b4; background: linear-gradient(#f0f0f0, #e2e2e2); color: #9a9a9a; }

.box { display: flex; width: 100%; height: 30px; border: 2px solid #b4b4b4; border-left-width: 1px; border-right-width: 1px; background: #fff; }
.box select, .box input, .box textarea { flex: 1; min-width: 0; height: 100%; padding: 0 3px; appearance: none; color: #333; }
.box textarea { resize: none; }
.drop { display: flex; align-items: center; justify-content: center; width: 26px; flex: none; border-left: 1px solid #b4b4b4; background: linear-gradient(#f4f4f4, #e2e2e2); }

.scroll { display: flex; background: #f0f0f0; flex: none; }
.scroll.v { flex-direction: column; width: 25px; }
.scroll.h { flex: 1; height: 26px; }
.scroll .end { display: flex; align-items: center; justify-content: center; width: 25px; height: 26px; flex: none; }
.scroll .thumb { background: #cdcdcd; }
.hrow { display: flex; flex: none; padding-right: 25px; background: #fff; }

.canvas-row { display: flex; flex: 1; min-height: 0; }
.canvas { display: flex; flex-direction: column; flex: 1; min-width: 0; overflow: hidden; margin-left: 13px; padding-left: 10px; border-left: 2px solid #d0d0d0; background: #ebebeb; }
.form-title { display: flex; align-items: center; gap: 7px; height: 33px; padding: 0 0 15px 4px; flex: none; font-size: 22px; white-space: nowrap; }
.form-body { display: flex; flex-direction: column; flex: 1; min-height: 0; border: solid #dadada; border-width: 2px 0 0 1px; background: #fff; }
.form-tools { display: flex; align-items: center; gap: 15px; height: 40px; padding: 0 0 0 10px; flex: none; }
.form-tools button { display: flex; align-items: center; gap: 6px; }
.form-tools .grip { margin-right: -6px; }
.form-tools .ico { margin-left: -3px; }

.tabs { position: relative; display: flex; align-items: flex-end; height: 38px; flex: none; border-bottom: 2px solid #b8b8b8; }
.tabs button { height: 34px; padding: 0 15px 1px 16px; border: 2px solid #b8b8b8; border-bottom: 0; border-left-width: 0; }
.tabs button.active { height: 38px; margin-bottom: -2px; padding: 0 16px 3px 16px; border-left-width: 1px; background: #fff; }
.tabs.entry { border-bottom-color: #8c8c8c; }
.pad { position: absolute; left: 8px; bottom: -4px; width: 11px; height: 15px; fill: #fff; stroke: #111; stroke-width: 1.5; }

.head-pane {
  display: grid;
  grid-template-columns: 108px 256px 160px 256px 157px 256px 190px 256px;
  grid-template-rows: repeat(7, 30px);
  gap: 8px 14px;
  flex: none;
  height: 311px;
  padding-top: 7px;
  overflow: hidden;
  border: solid #b8b8b8;
  border-width: 0 0 2px 1px;
}
.head-pane label { padding-top: 5px; text-align: right; color: #333; white-space: nowrap; }
.cell { display: flex; }
.head-pane .tax { grid-row: 6; grid-column: 4; display: flex; align-items: center; gap: 6px; padding: 3px 0 0 2px; text-align: left; }
.memo-label { grid-row: 7; grid-column: 5; }
.head-pane .memo { grid-row: 6 / 8; grid-column: 6; height: 68px; }
.memo-scroll { display: flex; flex-direction: column; justify-content: space-between; align-items: center; width: 27px; padding: 4px 0; background: #f0f0f0; opacity: .5; }
input[type="checkbox"] { appearance: none; flex: none; width: 19px; height: 19px; border: 2px solid #b4b4b4; background: #fff; }
input[type="checkbox"]:checked::before {
  content: "";
  display: block;
  width: 12px;
  height: 6px;
  margin: 2px 0 0 2px;
  border: solid #444;
  border-width: 0 0 2px 2px;
  transform: rotate(-45deg);
}
.form-split { display: flex; justify-content: center; align-items: center; height: 18px; padding-left: 403px; flex: none; }

.entry-pane { flex: 1; min-height: 0; overflow: hidden; border-left: 2px solid #8c8c8c; }
table { table-layout: fixed; border-collapse: collapse; }
.entry-pane table { width: 1639px; }
.entry-pane th, .entry-pane td { height: 31px; padding: 0 4px; overflow: hidden; text-overflow: ellipsis; white-space: nowrap; text-align: left; border: solid #ccc; border-width: 0 1px 1px 0; line-height: 28px; }
.entry-pane th { font-weight: 400; color: #000; border-bottom: 2px solid #b0b0b0; border-right-color: #b0b0b0; }
.entry-pane td { color: #555; }
.entry-pane .seq { font-weight: 700; color: #00f; }
.entry-pane .sel { background: #00f; color: #3c3c9c; }
.entry-pane .star { padding: 0; font-size: 12px; text-align: center; border-bottom: 0; border-right-color: #eee; }

.tray { display: flex; height: 124px; flex: none; border-top: 1px solid #d5d5d5; }
.tray-body { flex: 1; padding: 29px 31px; }
.db { width: 38px; height: 46px; }

/* right side */
.right { display: flex; flex-direction: column; gap: 7px; width: 361px; margin: 1px 0 2px; flex: none; }
.props { display: flex; flex-direction: column; flex: 1; min-height: 0; padding: 0 1px 1px 2px; }
.prop-tools { display: flex; align-items: center; height: 34px; margin: 5px 0 7px 2px; flex: none; }
.prop-tools button { display: grid; place-items: center; width: 36px; height: 34px; }
.prop-tools .rule { margin: 0 4px; }
.props > :global(.box) { flex: none; margin-bottom: 3px; }
.grid { display: flex; flex: 1; min-height: 0; border: 2px solid #a8a8a8; border-right-width: 1px; }
.grid :global(.end) { height: 22px; }
.grid-rows { flex: 1; min-width: 0; overflow: hidden; }
.grid table { width: 100%; }
.grid tr { height: 27px; }
.grid tr.tall { height: 29px; }
.grid th, .grid td { padding: 0 4px; overflow: hidden; white-space: nowrap; text-overflow: ellipsis; text-align: left; border: solid #d0d0d0; border-width: 0 1px 1px 0; line-height: 24px; }
.grid .gut { width: 23px; border-bottom: 0; border-right-color: #a8a8a8; }
.grid th { width: 140px; padding: 0 0 0 28px; font-size: 19px; font-weight: 700; text-overflow: clip; }
.grid .mid { text-align: center; line-height: 0; }
.grid .mid input { vertical-align: middle; }
.tip { display: flex; align-items: flex-end; height: 77px; margin-top: 4px; padding: 0 0 8px 7px; flex: none; border: 2px solid #c4c4b4; background: #ffffe1; }

.output { height: 56px; padding: 22px 7px 0; flex: none; }
.output button { display: block; height: 34px; padding: 0 6px 10px 5px; border-bottom: 6px solid #a9a9a9; line-height: 18px; }
.status { display: flex; align-items: center; gap: 14px; height: 39px; padding: 0 13px; flex: none; background: #0072c6; color: #fff; }

.marks { position: absolute; inset: 0; width: 100%; height: 100%; pointer-events: none; fill: none; stroke: #ee1c25; stroke-width: 4; }
.marks path { stroke-width: 5; }
.marks .head { fill: #ee1c25; stroke-width: 1; }
</style>
